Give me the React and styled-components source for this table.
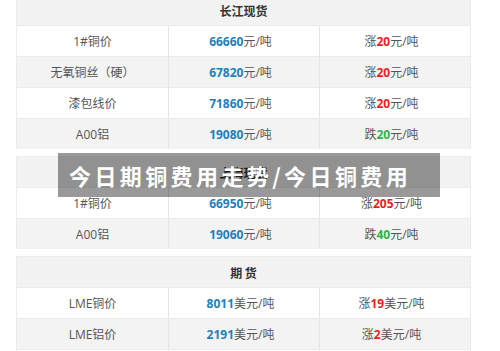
import React from "react";
import styled, { createGlobalStyle } from "styled-components";

const Global = createGlobalStyle`
  html, body { margin: 0; padding: 0; background: #fff; }
  body { font-family: "Open Sans", "Noto Sans CJK SC", sans-serif; overflow: hidden; }
`;

const Page = styled.div`
  position: relative;
  width: 500px;
  height: 351px;
  overflow: hidden;
  background: #fff;
`;

const Stack = styled.div`
  display: flex;
  flex-direction: column;
  gap: 7px;
  width: 455px;
  margin: -6px 0 0 16px;
`;

const Table = styled.div`
  display: flex;
  flex-direction: column;
  border: 1px solid #ebebeb;
  border-top: none;
  border-bottom: none;
  background: #fff;
`;

const Header = styled.div`
  height: 31px;
  display: flex;
  align-items: center;
  justify-content: center;
  background: #f2f2f2;
  border-top: 1px solid #ececec;
  box-sizing: border-box;
  font-family: "Noto Sans CJK SC", sans-serif;
  font-weight: 700;
  font-size: 12px;
  color: #333;
  white-space: pre;
`;

const Row = styled.div`
  display: grid;
  grid-template-columns: 1fr 1fr 1fr;
  height: 31px;
  box-sizing: border-box;
  border-top: 1px solid #ebebeb;
  background: ${(p) => (p.$alt ? "#f3f3f3" : "#fff")};
`;

const Cell = styled.div`
  display: flex;
  align-items: center;
  justify-content: center;
  padding-right: ${(p) => (p.$shift ? "7px" : "0")};
  border-left: ${(p) => (p.$first ? "none" : "1.5px solid #e4e4e4")};
  font-size: 12px;
  color: #555;
  white-space: nowrap;
`;

const Num = styled.b`
  font-weight: 700;
  color: ${(p) => p.$c};
`;

const Banner = styled.div`
  position: absolute;
  left: 58px;
  top: 153px;
  width: 382px;
  height: 44px;
  box-sizing: border-box;
  padding-left: 11px;
  display: flex;
  align-items: center;
  background: rgba(0, 0, 0, 0.4);
  color: #fff;
  font-family: "Noto Sans CJK SC", sans-serif;
  font-weight: 700;
  font-size: 22px;
  letter-spacing: 3.4px;
  white-space: nowrap;
`;

const BLUE = "#1f7fb9";
const RED = "#ee1c24";
const GREEN = "#2db34a";

const tables = [
  {
    title: "长江现货",
    rows: [
      ["1#铜价", "66660", "元/吨", "涨", "20", "元/吨"],
      ["无氧铜丝（硬）", "67820", "元/吨", "涨", "20", "元/吨"],
      ["漆包线价", "71860", "元/吨", "涨", "20", "元/吨"],
      ["A00铝", "19080", "元/吨", "跌", "20", "元/吨"],
    ],
  },
  {
    title: "上海现货",
    rows: [
      ["1#铜价", "66950", "元/吨", "涨", "205", "元/吨"],
      ["A00铝", "19060", "元/吨", "跌", "40", "元/吨"],
    ],
  },
  {
    title: "期 货",
    rows: [
      ["LME铜价", "8011", "美元/吨", "涨", "19", "美元/吨"],
      ["LME铝价", "2191", "美元/吨", "涨", "2", "美元/吨"],
      ["", "", "", "", "", ""],
    ],
  },
];

export default function App() {
  return (
    <Page>
      <Global />
      <Stack>
        {tables.map((t, ti) => (
          <Table key={ti}>
            <Header>{t.title}</Header>
            {t.rows.map((r, ri) => (
              <Row key={ri} $alt={ri % 2 === 1}>
                <Cell $first>{r[0]}</Cell>
                <Cell $shift>
                  {r[1] && <Num $c={BLUE}>{r[1]}</Num>}
                  {r[2]}
                </Cell>
                <Cell $shift>
                  {r[3]}
                  {r[4] && <Num $c={r[3] === "涨" ? RED : GREEN}>{r[4]}</Num>}
                  {r[5]}
                </Cell>
              </Row>
            ))}
          </Table>
        ))}
      </Stack>
      <Banner>今日期铜费用走势/今日铜费用</Banner>
    </Page>
  );
}
